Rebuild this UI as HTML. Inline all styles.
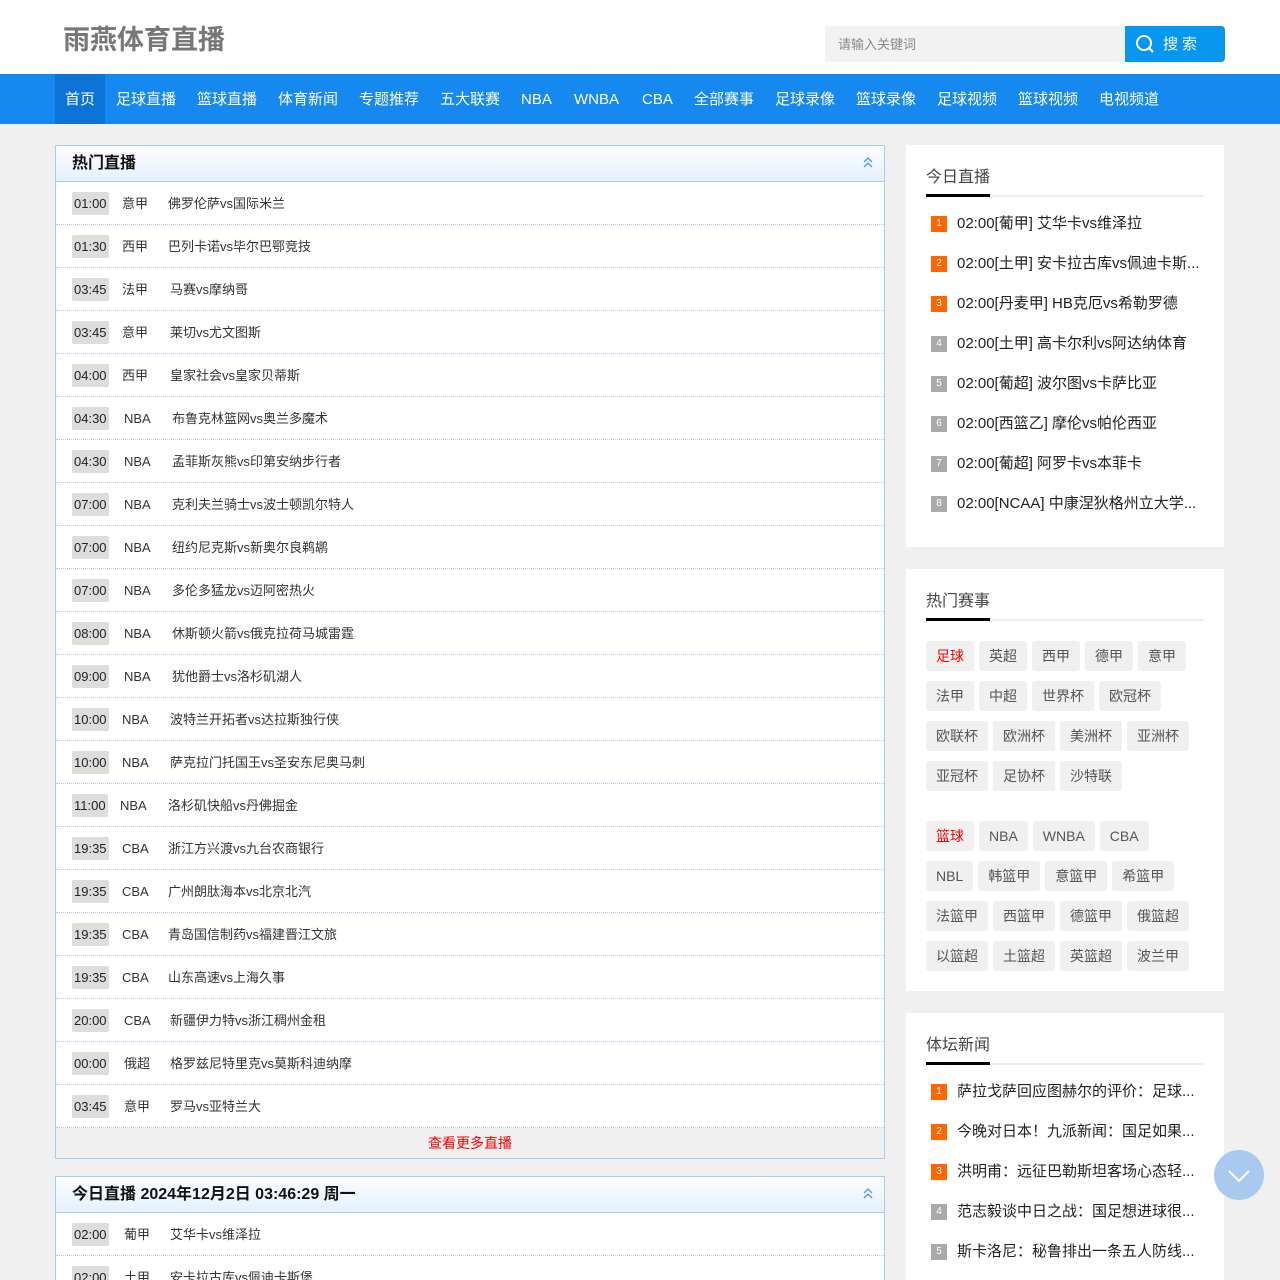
<!DOCTYPE html>
<html style="overflow:hidden;height:1280px"><head><meta charset="utf-8"><style>
*{margin:0;padding:0;box-sizing:border-box}
body{width:1280px;height:1280px;overflow:hidden;background:#f0f0f0;font-family:"Liberation Sans","Noto Sans CJK SC",sans-serif;position:relative;color:#333}
.hd{position:absolute;left:0;top:0;width:1280px;height:74px;background:#fff}
.logo{position:absolute;left:63px;top:18px;font-size:27px;font-weight:bold;color:#777}
.si{position:absolute;left:825px;top:26px;width:300px;height:36px;background:#f2f2f2;font-size:13px;color:#888;padding:8px 13px}
.sb{position:absolute;left:1125px;top:26px;width:100px;height:36px;background:#0797ee;border-radius:0 4px 4px 0;color:#fff;font-size:15px}
.nav{position:absolute;left:0;top:74px;width:1280px;height:50px;background:#1589f0}
.nav span{position:absolute;top:0;line-height:52px;color:#fff;font-size:15px}
.act{position:absolute;left:55px;top:74px;width:50px;height:50px;background:#0b74d6}
.pn{position:absolute;left:55px;width:830px;background:#fff;border:1px solid #a9cbec;overflow:hidden}
.ph{height:36px;background:linear-gradient(#fcfdff,#e4f0fd);border-bottom:1px solid #a9cbec;font-size:16px;font-weight:bold;color:#111;line-height:35px;padding-left:16px;position:relative}
.ph svg{position:absolute;right:11px;top:11px}
.row{height:43px;border-bottom:1px dotted #a9cbec;position:relative;font-size:13px;line-height:43px;color:#333}
.row .t{position:absolute;left:16px;top:10px;height:23px;line-height:23px;padding:0 2px;background:#ddd;border-radius:2px;color:#222}
.row .l{position:absolute;left:66px}
.row .m{position:absolute;left:112px}
.more{height:30px;background:#f0f0f0;text-align:center;color:#f00;font-size:14px;line-height:30px}
.rp{position:absolute;left:906px;width:318px;background:#fff;padding:0 20px}
.rt{position:relative;margin-top:22px;height:30px;border-bottom:2px solid #eee;font-size:16px;color:#444;line-height:22px}
.rt:after{content:"";position:absolute;left:0;bottom:-2px;width:64px;height:3px;background:#000}
.li{height:40px;line-height:40px;font-size:15px;color:#222;white-space:nowrap;overflow:hidden;position:relative;padding-left:31px}
.li b{position:absolute;left:5px;top:12px;width:16px;height:16px;background:#f60;color:#fff;font-size:10px;line-height:16px;text-align:center;font-weight:normal}
.li b.g{background:#aaa}
.tg{display:inline-block;height:30px;line-height:30px;padding:0 10px;background:#f0f0f0;border-radius:3px;margin:0 5px 10px 0;font-size:14px;color:#555}
.red{color:#f00}
</style></head><body>
<div class="hd"><div class="logo">雨燕体育直播</div>
<div class="si">请输入关键词</div>
<div class="sb"><svg style="position:absolute;left:10px;top:8px" width="20" height="20" viewBox="0 0 20 20"><circle cx="9" cy="9" r="7" fill="none" stroke="#fff" stroke-width="2"/><path d="M14 14l4 4" stroke="#fff" stroke-width="2"/></svg><span style="position:absolute;left:38px;top:7px;letter-spacing:4px">搜索</span></div></div>
<div class="nav"></div><div class="act"></div>
<div class="nav" style="background:none">
<span style="left:65px">首页</span><span style="left:116px">足球直播</span><span style="left:197px">篮球直播</span><span style="left:278px">体育新闻</span><span style="left:359px">专题推荐</span><span style="left:440px">五大联赛</span><span style="left:521px">NBA</span><span style="left:574px">WNBA</span><span style="left:642px">CBA</span><span style="left:694px">全部赛事</span><span style="left:775px">足球录像</span><span style="left:856px">篮球录像</span><span style="left:937px">足球视频</span><span style="left:1018px">篮球视频</span><span style="left:1099px">电视频道</span></div>

<div class="pn" style="top:145px">
<div class="ph">热门直播<svg width="10" height="12" viewBox="0 0 10 12"><path d="M1 5l4-4 4 4M1 10l4-4 4 4" fill="none" stroke="#4a9be6" stroke-width="1.3"/></svg></div>
<div class="row"><span class="t">01:00</span><span class="l">意甲</span><span class="m">佛罗伦萨vs国际米兰</span></div>
<div class="row"><span class="t">01:30</span><span class="l">西甲</span><span class="m">巴列卡诺vs毕尔巴鄂竞技</span></div>
<div class="row"><span class="t">03:45</span><span class="l">法甲</span><span class="m" style="left:114px">马赛vs摩纳哥</span></div>
<div class="row"><span class="t">03:45</span><span class="l">意甲</span><span class="m" style="left:114px">莱切vs尤文图斯</span></div>
<div class="row"><span class="t">04:00</span><span class="l">西甲</span><span class="m" style="left:114px">皇家社会vs皇家贝蒂斯</span></div>
<div class="row"><span class="t">04:30</span><span class="l" style="left:68px">NBA</span><span class="m" style="left:116px">布鲁克林篮网vs奥兰多魔术</span></div>
<div class="row"><span class="t">04:30</span><span class="l" style="left:68px">NBA</span><span class="m" style="left:116px">孟菲斯灰熊vs印第安纳步行者</span></div>
<div class="row"><span class="t">07:00</span><span class="l" style="left:68px">NBA</span><span class="m" style="left:116px">克利夫兰骑士vs波士顿凯尔特人</span></div>
<div class="row"><span class="t">07:00</span><span class="l" style="left:68px">NBA</span><span class="m" style="left:116px">纽约尼克斯vs新奥尔良鹈鹕</span></div>
<div class="row"><span class="t">07:00</span><span class="l" style="left:68px">NBA</span><span class="m" style="left:116px">多伦多猛龙vs迈阿密热火</span></div>
<div class="row"><span class="t">08:00</span><span class="l" style="left:68px">NBA</span><span class="m" style="left:116px">休斯顿火箭vs俄克拉荷马城雷霆</span></div>
<div class="row"><span class="t">09:00</span><span class="l" style="left:68px">NBA</span><span class="m" style="left:116px">犹他爵士vs洛杉矶湖人</span></div>
<div class="row"><span class="t">10:00</span><span class="l">NBA</span><span class="m" style="left:114px">波特兰开拓者vs达拉斯独行侠</span></div>
<div class="row"><span class="t">10:00</span><span class="l">NBA</span><span class="m" style="left:114px">萨克拉门托国王vs圣安东尼奥马刺</span></div>
<div class="row"><span class="t">11:00</span><span class="l" style="left:64px">NBA</span><span class="m">洛杉矶快船vs丹佛掘金</span></div>
<div class="row"><span class="t">19:35</span><span class="l">CBA</span><span class="m">浙江方兴渡vs九台农商银行</span></div>
<div class="row"><span class="t">19:35</span><span class="l">CBA</span><span class="m">广州朗肽海本vs北京北汽</span></div>
<div class="row"><span class="t">19:35</span><span class="l">CBA</span><span class="m">青岛国信制药vs福建晋江文旅</span></div>
<div class="row"><span class="t">19:35</span><span class="l">CBA</span><span class="m">山东高速vs上海久事</span></div>
<div class="row"><span class="t">20:00</span><span class="l" style="left:68px">CBA</span><span class="m" style="left:114px">新疆伊力特vs浙江稠州金租</span></div>
<div class="row"><span class="t">00:00</span><span class="l" style="left:68px">俄超</span><span class="m" style="left:114px">格罗兹尼特里克vs莫斯科迪纳摩</span></div>
<div class="row"><span class="t">03:45</span><span class="l" style="left:68px">意甲</span><span class="m" style="left:114px">罗马vs亚特兰大</span></div>
<div class="more">查看更多直播</div>
</div>

<div class="pn" style="top:1176px;height:130px">
<div class="ph">今日直播 2024年12月2日 03:46:29 周一<svg width="10" height="12" viewBox="0 0 10 12"><path d="M1 5l4-4 4 4M1 10l4-4 4 4" fill="none" stroke="#4a9be6" stroke-width="1.3"/></svg></div>
<div class="row"><span class="t">02:00</span><span class="l" style="left:68px">葡甲</span><span class="m" style="left:114px">艾华卡vs维泽拉</span></div>
<div class="row"><span class="t">02:00</span><span class="l" style="left:68px">土甲</span><span class="m" style="left:114px">安卡拉古库vs佩迪卡斯堡</span></div>
</div>

<div class="rp" style="top:145px;height:402px">
<div class="rt">今日直播</div>
<div style="padding-top:7px">
<div class="li"><b>1</b>02:00[葡甲] 艾华卡vs维泽拉</div>
<div class="li"><b>2</b>02:00[土甲] 安卡拉古库vs佩迪卡斯...</div>
<div class="li"><b>3</b>02:00[丹麦甲] HB克厄vs希勒罗德</div>
<div class="li"><b class="g">4</b>02:00[土甲] 高卡尔利vs阿达纳体育</div>
<div class="li"><b class="g">5</b>02:00[葡超] 波尔图vs卡萨比亚</div>
<div class="li"><b class="g">6</b>02:00[西篮乙] 摩伦vs帕伦西亚</div>
<div class="li"><b class="g">7</b>02:00[葡超] 阿罗卡vs本菲卡</div>
<div class="li"><b class="g">8</b>02:00[NCAA] 中康涅狄格州立大学...</div>
</div></div>

<div class="rp" style="top:569px;height:422px">
<div class="rt">热门赛事</div>
<div style="padding-top:20px">
<span class="tg red">足球</span><span class="tg">英超</span><span class="tg">西甲</span><span class="tg">德甲</span><span class="tg">意甲</span><br>
<span class="tg">法甲</span><span class="tg">中超</span><span class="tg">世界杯</span><span class="tg">欧冠杯</span><br>
<span class="tg">欧联杯</span><span class="tg">欧洲杯</span><span class="tg">美洲杯</span><span class="tg">亚洲杯</span><br>
<span class="tg">亚冠杯</span><span class="tg">足协杯</span><span class="tg">沙特联</span><br>
<div style="height:20px"></div>
<span class="tg red">篮球</span><span class="tg">NBA</span><span class="tg">WNBA</span><span class="tg">CBA</span><br>
<span class="tg">NBL</span><span class="tg">韩篮甲</span><span class="tg">意篮甲</span><span class="tg">希篮甲</span><br>
<span class="tg">法篮甲</span><span class="tg">西篮甲</span><span class="tg">德篮甲</span><span class="tg">俄篮超</span><br>
<span class="tg">以篮超</span><span class="tg">土篮超</span><span class="tg">英篮超</span><span class="tg">波兰甲</span>
</div></div>

<div class="rp" style="top:1013px;height:300px">
<div class="rt">体坛新闻</div>
<div style="padding-top:7px">
<div class="li"><b>1</b>萨拉戈萨回应图赫尔的评价：足球...</div>
<div class="li"><b>2</b>今晚对日本！九派新闻：国足如果...</div>
<div class="li"><b>3</b>洪明甫：远征巴勒斯坦客场心态轻...</div>
<div class="li"><b class="g">4</b>范志毅谈中日之战：国足想进球很...</div>
<div class="li"><b class="g">5</b>斯卡洛尼：秘鲁排出一条五人防线...</div>
</div></div>

<div style="position:absolute;left:1214px;top:1150px;width:50px;height:50px;border-radius:50%;background:#a9c9ee"><svg width="50" height="50"><path d="M15 21l10 10 10-10" fill="none" stroke="#fff" stroke-width="2"/></svg></div>
</body></html>
